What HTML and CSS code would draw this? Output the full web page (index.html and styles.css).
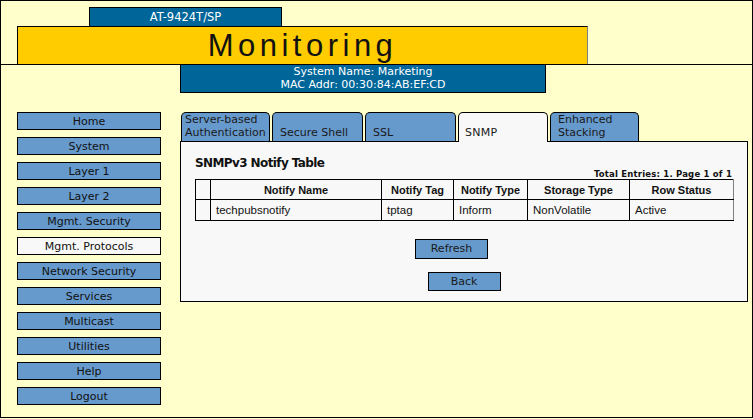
FILE: index.html
```html
<!DOCTYPE html>
<html>
<head>
<meta charset="utf-8">
<title>Monitoring</title>
<link rel="stylesheet" href="styles.css">
</head>
<body>
<div class="frame">
  <div class="header">
    <div class="model">AT-9424T/SP</div>
    <div class="title-box">Monitoring</div>
  </div>
  <div class="sysname">System Name: Marketing<br>MAC Addr: 00:30:84:AB:EF:CD</div>
  <div class="main">
    <div class="nav">
      <div class="nav-btn">Home</div>
      <div class="nav-btn">System</div>
      <div class="nav-btn">Layer 1</div>
      <div class="nav-btn">Layer 2</div>
      <div class="nav-btn">Mgmt. Security</div>
      <div class="nav-btn nav-active">Mgmt. Protocols</div>
      <div class="nav-btn">Network Security</div>
      <div class="nav-btn">Services</div>
      <div class="nav-btn">Multicast</div>
      <div class="nav-btn">Utilities</div>
      <div class="nav-btn">Help</div>
      <div class="nav-btn">Logout</div>
    </div>
    <div class="content">
      <div class="tabs">
        <div class="tab tab-first">Server-based<br>Authentication</div>
        <div class="tab tab-w91">Secure Shell</div>
        <div class="tab tab-w91">SSL</div>
        <div class="tab tab-active">SNMP</div>
        <div class="tab">Enhanced<br>Stacking</div>
      </div>
      <div class="panel">
        <div class="panel-title">SNMPv3 Notify Table</div>
        <div class="entries">Total Entries: 1. Page 1 of 1</div>
        <table class="grid">
          <colgroup>
            <col class="c0"><col class="c1"><col class="c2"><col class="c3"><col class="c4"><col class="c5">
          </colgroup>
          <tr class="head">
            <th></th><th>Notify Name</th><th>Notify Tag</th><th>Notify Type</th><th>Storage Type</th><th>Row Status</th>
          </tr>
          <tr class="row">
            <td></td><td>techpubsnotify</td><td>tptag</td><td>Inform</td><td>NonVolatile</td><td>Active</td>
          </tr>
        </table>
        <div class="actions">
          <div class="btn btn-refresh">Refresh</div>
          <div class="btn btn-back">Back</div>
        </div>
      </div>
    </div>
  </div>
</div>
</body>
</html>
```
FILE: styles.css
```css
* { box-sizing: border-box; }
html, body { margin: 0; padding: 0; background: #ffffcc; }
body { font-family: "DejaVu Sans", Verdana, sans-serif; font-size: 11px; color: #111; }

.frame {
  width: 753px;
  height: 418px;
  border: 1px solid #000;
  background: #ffffcc;
  overflow: hidden;
}

.header {
  height: 64px;
  padding-top: 6px;
  border-bottom: 1px solid #000;
}
.model {
  margin-left: 88px;
  width: 193px;
  height: 19px;
  background: #006699;
  border: 1px solid #000;
  border-bottom: none;
  color: #fff;
  text-align: center;
  font-size: 11.5px;
  line-height: 18px;
}
.title-box {
  margin-left: 16px;
  width: 571px;
  height: 38px;
  background: #ffcc00;
  border-top: 1px solid #000;
  border-left: 1px solid #000;
  border-right: 1px solid #808080;
  text-align: center;
  font-family: "Liberation Sans", Arial, sans-serif;
  font-size: 31px;
  letter-spacing: 4.5px;
  line-height: 37px;
  color: #111;
}

.sysname {
  margin-left: 179px;
  width: 366px;
  height: 28px;
  background: #006699;
  border: 1px solid #000;
  border-top: none;
  color: #fff;
  text-align: center;
  line-height: 13px;
}

.main {
  display: flex;
  padding-top: 19px;
  padding-left: 16px;
}
.nav {
  width: 144px;
  display: flex;
  flex-direction: column;
  gap: 7px;
}
.nav-btn {
  height: 18px;
  background: #6699cc;
  border: 1px solid #000;
  text-align: center;
  line-height: 17px;
  color: #111;
}
.nav-active { background: #f8f8f8; }

.content {
  margin-left: 19px;
  width: 568px;
}
.tabs {
  display: flex;
  align-items: flex-end;
  gap: 2px;
  padding-left: 1px;
  height: 29px;
}
.tab {
  width: 89px;
  height: 29px;
  background: #6699cc;
  border: 1px solid #000;
  border-bottom: none;
  border-radius: 5px 5px 0 0;
  padding: 0 4px 2px 7px;
  display: flex;
  align-items: flex-end;
  line-height: 13px;
  color: #1a1a1a;
}
.tab-first { padding-left: 3px; }
.tab-w91 { width: 91px; }
.tab-active {
  width: 90px;
  height: 30px;
  margin-bottom: -1px;
  background: #f8f8f8;
  position: relative;
  z-index: 1;
  padding-left: 6px;
  padding-bottom: 3px;
  letter-spacing: 0.3px;
}

.panel {
  height: 161px;
  background: #f8f8f8;
  border: 1px solid #000;
  padding: 14px 14px 0 14px;
}
.panel-title {
  font-weight: bold;
  font-size: 12px;
  letter-spacing: -0.6px;
  line-height: 14px;
  color: #111;
}
.entries {
  text-align: right;
  font-weight: bold;
  font-size: 8.5px;
  letter-spacing: 0.2px;
  line-height: 9px;
  padding-right: 1px;
}

.grid {
  width: 539px;
  table-layout: fixed;
  border-collapse: collapse;
  font-family: "Liberation Sans", Arial, sans-serif;
  color: #111;
}
.grid th, .grid td {
  border: 1px solid #000;
  padding: 0 5px;
  white-space: nowrap;
  overflow: hidden;
}
.grid th:last-child, .grid td:last-child { border-right-color: #808080; }
.grid th {
  height: 20px;
  font-size: 11px;
  font-weight: bold;
  text-align: center;
}
.grid td {
  height: 21px;
  font-size: 11.5px;
  text-align: left;
}
.c0 { width: 15px; }
.c1 { width: 171px; }
.c2 { width: 72px; }
.c3 { width: 74px; }
.c4 { width: 102px; }
.c5 { width: 104px; }

.actions {
  display: flex;
  flex-direction: column;
  align-items: center;
  gap: 13px;
  padding-top: 18px;
}
.btn {
  width: 73px;
  background: #6699cc;
  border: 1px solid #000;
  text-align: center;
  color: #1a1a1a;
}
.btn-refresh { height: 20px; line-height: 18px; margin-right: 25px; }
.btn-back { height: 19px; line-height: 17px; }
```
